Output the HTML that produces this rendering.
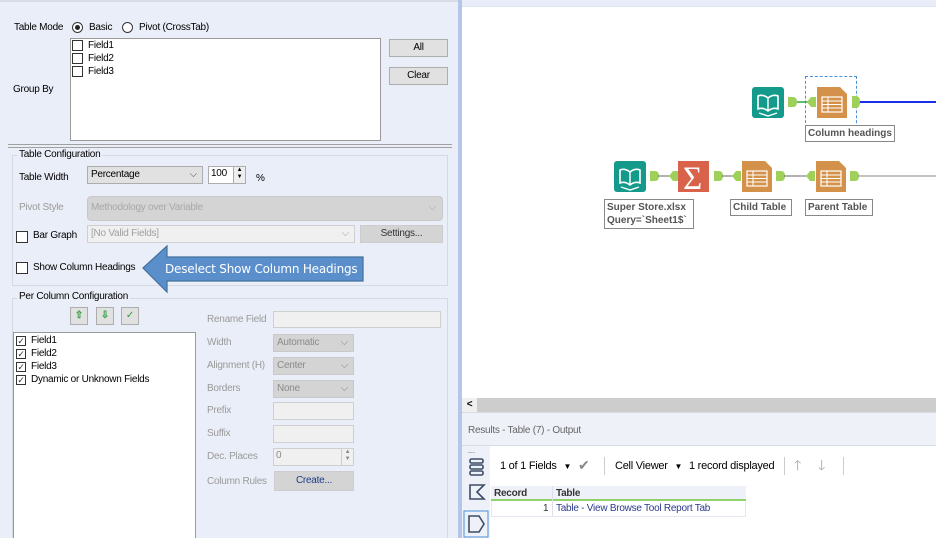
<!DOCTYPE html>
<html style="overflow:hidden"><head><meta charset="utf-8"><style>
*{box-sizing:border-box;margin:0;padding:0}
html,body{width:936px;height:538px;overflow:hidden}
body{position:relative;background:#fff;font-family:"Liberation Sans",sans-serif;font-size:10px;letter-spacing:-0.25px;color:#000}
.a{position:absolute}
.t{position:absolute;white-space:nowrap;line-height:14px}
.g{color:#9a9a9a}
.cb{position:absolute;width:11px;height:11px;border:1px solid #333;background:#fff}
.btn{position:absolute;border:1px solid #adadad;background:#e1e1e1;text-align:center;line-height:16px}
.dis{position:absolute;background:#d4d4d4;border:1px solid #c8c8c8;color:#8a8a8a;padding-left:3px}
.inp{position:absolute;background:#f0f0f0;border:1px solid #cfcfcf}
.grp{position:absolute;border:1px solid #d5d9e2}
.lbl{position:absolute;background:#eaeef8;padding:0 2px;white-space:nowrap;line-height:14px}
.chk{position:absolute;width:10px;height:10px;border:1px solid #333;background:#fff;font-size:9px;line-height:8px;text-align:center;color:#333}
.node{position:absolute;border:1px solid #888;background:#fff;font-size:10px;font-weight:bold;color:#555;padding:1px 2px;line-height:13px;white-space:nowrap;letter-spacing:0}
</style></head><body>
<div class="a" style="left:0;top:0;width:458px;height:538px;background:#eaeef8;border-top:2px solid #d8dce6"></div>
<div class="a" style="left:458px;top:0;width:4px;height:538px;background:#b6c6e8"></div>
<div class="t" style="left:14px;top:21px">Table Mode</div>
<div class="a" style="left:72px;top:22px;width:11px;height:11px;border:1px solid #333;border-radius:50%;background:#fff"><div class="a" style="left:2px;top:2px;width:5px;height:5px;border-radius:50%;background:#222"></div></div>
<div class="t" style="left:89px;top:21px">Basic</div>
<div class="a" style="left:122px;top:22px;width:11px;height:11px;border:1px solid #333;border-radius:50%;background:#fff"></div>
<div class="t" style="left:139px;top:21px">Pivot (CrossTab)</div>
<div class="a" style="left:70px;top:38px;width:311px;height:103px;background:#fff;border:1px solid #9a9a9a"></div>
<div class="cb" style="left:72px;top:40px"></div><div class="t" style="left:88px;top:39px">Field1</div>
<div class="cb" style="left:72px;top:53px"></div><div class="t" style="left:88px;top:52px">Field2</div>
<div class="cb" style="left:72px;top:66px"></div><div class="t" style="left:88px;top:65px">Field3</div>
<div class="t" style="left:13px;top:83px">Group By</div>
<div class="btn" style="left:389px;top:39px;width:59px;height:18px">All</div>
<div class="btn" style="left:389px;top:67px;width:59px;height:18px">Clear</div>
<div class="a" style="left:8px;top:144px;width:444px;height:4px;border-top:1px solid #a0a0a0;border-bottom:1px solid #a0a0a0"></div>
<div class="grp" style="left:12px;top:155px;width:436px;height:131px"></div>
<div class="lbl" style="left:17px;top:148px">Table Configuration</div>
<div class="t" style="left:19px;top:171px">Table Width</div>
<div class="a" style="left:87px;top:166px;width:116px;height:18px;background:#e1e1e1;border:1px solid #adadad;padding-left:3px;line-height:15px">Percentage<span style="position:absolute;right:5px;top:0;color:#555">⌵</span></div>
<div class="a" style="left:208px;top:166px;width:38px;height:18px;background:#fff;border:1px solid #adadad;padding-left:2px;line-height:14px">100<div class="a" style="right:0;top:0;width:12px;height:16px;border-left:1px solid #aaa;background:#eee;font-size:6px;line-height:7px;text-align:center">▲<br>▼</div></div>
<div class="t" style="left:256px;top:172px">%</div>
<div class="t g" style="left:19px;top:201px">Pivot Style</div>
<div class="dis" style="left:87px;top:196px;width:356px;height:25px;border-radius:4px;line-height:22px;color:#a8a8a8">Methodology over Variable<span style="position:absolute;right:6px;top:0">⌵</span></div>
<div class="cb" style="left:16px;top:231px;width:12px;height:12px"></div>
<div class="t" style="left:33px;top:229px">Bar Graph</div>
<div class="inp" style="left:87px;top:225px;width:268px;height:18px;color:#a0a0a0;padding-left:3px;line-height:15px">[No Valid Fields]<span style="position:absolute;right:5px;top:0">⌵</span></div>
<div class="btn" style="left:360px;top:225px;width:83px;height:18px;background:#d4d4d4;border-color:#ccc;color:#333">Settings...</div>
<div class="cb" style="left:16px;top:262px;width:12px;height:12px"></div>
<div class="t" style="left:33px;top:261px">Show Column Headings</div>
<svg class="a" style="left:140px;top:244px" width="226" height="52"><path d="M3,24 L27,2 L27,13 L223,13 L223,37 L27,37 L27,48 Z" fill="#5b8fcc" stroke="#41719c" stroke-width="1.2"/></svg>
<div class="t" style="left:165px;top:262px;color:#fff;font-size:12px;font-family:'DejaVu Sans',sans-serif;letter-spacing:-0.2px">Deselect Show Column Headings</div>
<div class="grp" style="left:12px;top:298px;width:436px;height:250px"></div>
<div class="lbl" style="left:17px;top:290px">Per Column Configuration</div>
<div class="btn" style="left:70px;top:307px;width:18px;height:18px;color:#2e9e3c;font-weight:bold;line-height:15px">⇧</div>
<div class="btn" style="left:96px;top:307px;width:18px;height:18px;color:#2e9e3c;font-weight:bold;line-height:15px">⇩</div>
<div class="btn" style="left:121px;top:307px;width:18px;height:18px;color:#2e9e3c;line-height:16px">✓</div>
<div class="a" style="left:13px;top:332px;width:183px;height:220px;background:#fff;border:1px solid #9a9a9a"></div>
<div class="chk" style="left:16px;top:336px">✓</div><div class="t" style="left:31px;top:334px">Field1</div>
<div class="chk" style="left:16px;top:349px">✓</div><div class="t" style="left:31px;top:347px">Field2</div>
<div class="chk" style="left:16px;top:362px">✓</div><div class="t" style="left:31px;top:360px">Field3</div>
<div class="chk" style="left:16px;top:375px">✓</div><div class="t" style="left:31px;top:373px">Dynamic or Unknown Fields</div>
<div class="t g" style="left:207px;top:313px">Rename Field</div>
<div class="inp" style="left:273px;top:311px;width:168px;height:17px"></div>
<div class="t g" style="left:207px;top:336px">Width</div>
<div class="dis" style="left:273px;top:334px;width:81px;height:18px;line-height:15px">Automatic<span style="position:absolute;right:5px">⌵</span></div>
<div class="t g" style="left:207px;top:359px">Alignment (H)</div>
<div class="dis" style="left:273px;top:357px;width:81px;height:18px;line-height:15px">Center<span style="position:absolute;right:5px">⌵</span></div>
<div class="t g" style="left:207px;top:382px">Borders</div>
<div class="dis" style="left:273px;top:380px;width:81px;height:18px;line-height:15px">None<span style="position:absolute;right:5px">⌵</span></div>
<div class="t g" style="left:207px;top:404px">Prefix</div>
<div class="inp" style="left:273px;top:402px;width:81px;height:18px"></div>
<div class="t g" style="left:207px;top:427px">Suffix</div>
<div class="inp" style="left:273px;top:425px;width:81px;height:18px"></div>
<div class="t g" style="left:207px;top:450px">Dec. Places</div>
<div class="inp" style="left:273px;top:448px;width:81px;height:18px;color:#888;padding-left:2px;line-height:14px">0<div class="a" style="right:0;top:0;width:12px;height:16px;border-left:1px solid #ccc;font-size:6px;line-height:7px;text-align:center">▲<br>▼</div></div>
<div class="t g" style="left:207px;top:475px">Column Rules</div>
<div class="btn" style="left:274px;top:471px;width:80px;height:20px;background:#d4d4d4;border-color:#ccc;color:#1a3d8a;line-height:18px">Create...</div>

<div class="a" style="left:462px;top:0;width:474px;height:7px;background:#e8edf7;border-bottom:1px solid #dde3f0"></div>
<div class="a" style="left:805px;top:76px;width:52px;height:52px;border:1px dashed #4a90d9"></div>
<svg class="a" style="left:462px;top:60px" width="474" height="140">
<defs>
<g id="book"><rect width="32" height="31" rx="3" fill="#139a8b"/><path d="M6,9 L6,22 Q11,20 16,24 Q21,20 26,22 L26,9 Q21,7 16,11 Q11,7 6,9 Z" fill="none" stroke="#fff" stroke-width="1.6"/><path d="M16,11 L16,24 M7,26 L16,29 L25,26" fill="none" stroke="#fff" stroke-width="1.4"/></g>
<g id="tab"><path d="M0,0 L23,0 L30,7 L30,31 L0,31 Z" fill="#d4914a"/><rect x="5" y="10" width="20" height="15" fill="none" stroke="#fff" stroke-width="1.2"/><path d="M5,14 H25 M5,17.5 H25 M5,21 H25 M11,10 V25" stroke="#fff" stroke-width="1"/></g>
<g id="out"><path d="M0,0 H5 Q9,0 9,5 Q9,10 5,10 H0 Z" fill="#9fd15a"/></g>
<g id="in"><path d="M0,5 L4,0 H9 V10 H4 Z" fill="#9fd15a"/></g>
</defs>
<use href="#book" x="290" y="27"/>
<use href="#out" x="326" y="37"/><line x1="335" y1="42" x2="348" y2="42" stroke="#2aa84a" stroke-width="1.5"/><use href="#in" x="345" y="37"/>
<use href="#tab" x="355" y="27"/>
<path d="M390,36 H394 Q398,36 398,42 Q398,48 394,48 H390 Z" fill="#9fd15a"/>
<line x1="398" y1="42" x2="474" y2="42" stroke="#1a2ee8" stroke-width="2"/>
<use href="#book" x="152" y="101"/>
<use href="#out" x="188" y="111"/><line x1="196" y1="116" x2="210" y2="116" stroke="#666"/><use href="#in" x="207" y="111"/>
<path d="M216,101 H247 V132 H216 Z" fill="#d9634a"/>
<text x="221" y="129" font-family="Liberation Serif,serif" font-size="33" fill="#fff">Σ</text>
<use href="#out" x="252" y="111"/><line x1="260" y1="116" x2="272" y2="116" stroke="#666"/><use href="#in" x="270" y="111"/>
<use href="#tab" x="280" y="101"/>
<use href="#out" x="314" y="111"/><line x1="322" y1="116" x2="346" y2="116" stroke="#666"/><use href="#in" x="344" y="111"/>
<use href="#tab" x="354" y="101"/>
<use href="#out" x="388" y="111"/><line x1="396" y1="116" x2="474" y2="116" stroke="#888"/>
</svg>
<div class="node" style="left:805px;top:125px;width:90px">Column headings</div>
<div class="node" style="left:604px;top:199px;width:90px">Super Store.xlsx<br>Query=`Sheet1$`</div>
<div class="node" style="left:730px;top:199px;width:62px">Child Table</div>
<div class="node" style="left:805px;top:199px;width:68px">Parent Table</div>

<div class="a" style="left:462px;top:398px;width:474px;height:14px;background:#cdcdcd"><div class="a" style="left:0;top:0;width:15px;height:14px;background:#f0f0f0;font-size:10px;font-weight:bold;text-align:center;line-height:13px">&lt;</div></div>
<div class="a" style="left:462px;top:412px;width:474px;height:34px;background:#eef1f8;border-top:1px solid #d6dbe6;border-bottom:1px solid #d6dbe6"></div>
<div class="t" style="left:468px;top:424px;color:#666">Results - Table (7) - Output</div>
<div class="a" style="left:462px;top:446px;width:28px;height:92px;background:#eef1f8"></div>
<div class="t" style="left:467px;top:444px;color:#999;font-size:8px;letter-spacing:-1px">......</div>
<svg class="a" style="left:462px;top:455px" width="28" height="83"><g fill="none" stroke="#3d4d66" stroke-width="1.6"><rect x="8" y="4" width="13" height="4" rx="1.5"/><rect x="8" y="10" width="13" height="4" rx="1.5"/><rect x="8" y="16" width="13" height="4" rx="1.5"/><path d="M8,30 H22 L15,37 L22,44 H8 Z"/><rect x="2" y="56" width="24" height="26" stroke="#4a90d9" stroke-width="1"/><path d="M7,61 H17 L22,69 L17,77 H7 Z"/></g></svg>
<div class="t" style="left:500px;top:459px;font-size:11px">1 of 1 Fields <span style="font-size:8px;margin-left:4px">▼</span></div>
<div class="t" style="left:578px;top:458px;font-size:14px;color:#888">✔</div>
<div class="a" style="left:604px;top:457px;width:1px;height:18px;background:#ccc"></div>
<div class="t" style="left:615px;top:459px;font-size:11px">Cell Viewer <span style="font-size:8px;margin-left:4px">▼</span></div>
<div class="t" style="left:689px;top:459px;font-size:11px">1 record displayed</div>
<div class="a" style="left:784px;top:457px;width:1px;height:18px;background:#ccc"></div>
<div class="t" style="left:794px;top:458px;font-size:14px;color:#aaa">🡑</div>
<div class="t" style="left:818px;top:458px;font-size:14px;color:#aaa">🡓</div>
<div class="a" style="left:843px;top:457px;width:1px;height:18px;background:#ccc"></div>
<div class="a" style="left:491px;top:486px;width:255px;height:15px;background:#eef1f8;border-bottom:2px solid #8ed46a"></div>
<div class="a" style="left:552px;top:486px;width:1px;height:30px;background:#dde"></div>
<div class="t" style="left:494px;top:487px;font-weight:bold;color:#333">Record</div>
<div class="t" style="left:556px;top:487px;font-weight:bold;color:#333">Table</div>
<div class="a" style="left:491px;top:501px;width:255px;height:16px;border:1px solid #e4e8f0;border-top:0"></div>
<div class="t" style="left:543px;top:502px;color:#333">1</div>
<div class="t" style="left:556px;top:502px;color:#2a3a8c">Table - View Browse Tool Report Tab</div>
</body></html>
